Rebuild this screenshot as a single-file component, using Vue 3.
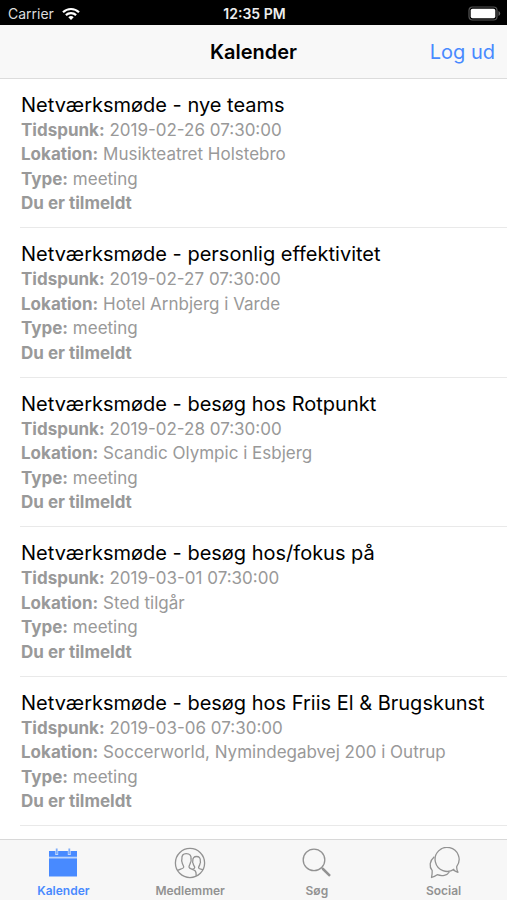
<script setup>
import { ref } from 'vue'

const events = [
  { title: 'Netværksmøde - nye teams', time: '2019-02-26 07:30:00', place: 'Musikteatret Holstebro' },
  { title: 'Netværksmøde - personlig effektivitet', time: '2019-02-27 07:30:00', place: 'Hotel Arnbjerg i Varde' },
  { title: 'Netværksmøde - besøg hos Rotpunkt', time: '2019-02-28 07:30:00', place: 'Scandic Olympic i Esbjerg' },
  { title: 'Netværksmøde - besøg hos/fokus på', time: '2019-03-01 07:30:00', place: 'Sted tilgår' },
  { title: 'Netværksmøde - besøg hos Friis El & Brugskunst', time: '2019-03-06 07:30:00', place: 'Soccerworld, Nymindegabvej 200 i Outrup' },
]
const tabs = ['Kalender', 'Medlemmer', 'Søg', 'Social']
const active = ref('Kalender')
</script>

<template>
  <div class="screen">
    <div class="status">
      <div class="carrier">
        <span>Carrier</span>
        <svg width="18" height="14" viewBox="0 0 18 14" fill="none" stroke="#fff" stroke-width="2.200">
          <path d="M1 5.2C5.4.9 12.600.9 17 5.2" />
          <path d="M3.900 8.100C6.700 5.400 11.300 5.400 14.100 8.100" />
          <path d="M6.300 10.300Q9 7.900 11.700 10.300L9 13Z" fill="#fff" stroke="none" />
        </svg>
      </div>
      <span class="clock">12:35 PM</span>
      <svg class="battery" width="33" height="15" viewBox="0 0 33 15">
        <rect x="1" y="1" width="28" height="13" rx="3.500" fill="none" stroke="#555" stroke-width="1.200" />
        <rect x="2.700" y="2.700" width="24.600" height="9.600" rx="1.800" fill="#fff" />
        <path d="M30.500 5v5q1.700-.7 1.700-2.500T30.500 5Z" fill="#666" />
      </svg>
    </div>

    <header class="navbar">
      <h1>Kalender</h1>
      <button class="logout" type="button">Log ud</button>
    </header>

    <ul class="events">
      <li v-for="event in events" :key="event.time" class="event">
        <h2>{{ event.title }}</h2>
        <div class="details">
          <p><b>Tidspunk:</b> {{ event.time }}</p>
          <p><b>Lokation:</b> {{ event.place }}</p>
          <p><b>Type:</b> meeting</p>
          <p><b>Du er tilmeldt</b></p>
        </div>
      </li>
    </ul>

    <nav class="tabs">
      <button
        v-for="tab in tabs"
        :key="tab"
        type="button"
        class="tab"
        :class="{ active: active === tab }"
        @click="active = tab"
      >
        <svg v-if="tab === 'Kalender'" width="32" height="32" viewBox="0 0 32 32">
          <path d="M2 4h28v25.500H2Z" fill="currentColor" />
          <path d="M2 10.600h28" stroke="#bcd5fb" stroke-width="1.800" />
          <path d="M9.700 4v4M22.300 4v4" stroke="#c4d9fb" stroke-width="3" />
          <path d="M9.700 1.500v5.500M22.300 1.500v5.500" stroke="#7eacf8" stroke-width="1.800" />
        </svg>
        <svg v-else-if="tab === 'Medlemmer'" width="32" height="32" viewBox="0 0 32 32" fill="none" stroke="currentColor" stroke-width="1.300" stroke-linejoin="round">
          <circle cx="16" cy="16" r="14.600" />
          <path d="M3.600 23.500C5.500 22 9.500 22 9.700 20.200C9.900 18.600 8.200 17.500 8 15C7.700 14.500 7.600 13.200 7.900 12C7.600 8.500 9 6.600 12.200 6.600C16 6.600 17.500 8.800 17 12C17.300 13.500 17 14.800 16.600 15.200C16.300 17.400 14.800 18.500 15 20.200C15.200 22 19.800 22.500 21.300 24C22.300 25.200 22.200 27 22.200 29" />
          <path d="M18.300 22.300C19.800 22 20.700 21.700 20.700 20.500C20.700 19.200 19.300 18.400 19.100 16.400C18.600 15.800 18.500 14.700 18.800 13.900C18.600 11 20 9.500 22.500 9.500C25.200 9.500 26.600 11 26.300 14C26.600 15 26.400 16.100 26 16.600C25.800 18.500 24.500 19.300 24.600 20.700C24.700 22.100 27.500 22 28.900 22.900" />
        </svg>
        <svg v-else-if="tab === 'Søg'" width="32" height="32" viewBox="0 0 32 32" fill="none" stroke="currentColor">
          <circle cx="13" cy="12.900" r="10.800" stroke-width="1.300" />
          <path d="M20.500 20.500 22 22" stroke-width="1.500" />
          <path d="M21.500 21.500 29 28.800" stroke-width="2.500" />
        </svg>
        <svg v-else width="32" height="32" viewBox="0 0 32 32" fill="none" stroke="currentColor" stroke-width="1.300" stroke-linejoin="round">
          <path d="M26.300 22A12 12 0 1 1 28.700 19.600Q28.500 22.500 30 25.300Q27.900 24.800 25.200 22.900" />
          <path d="M6.300 9.800C1.500 14 .9 19.500 4.200 23.600Q4.300 27.500 3.500 30.500Q6.500 29.500 9.200 27.700C14 29.400 19.300 28.500 21.300 25" />
        </svg>
        <span>{{ tab }}</span>
      </button>
    </nav>
  </div>
</template>

<style>
body {
  margin: 0;
}
</style>

<style scoped>
.screen {
  display: flex;
  flex-direction: column;
  min-height: 100vh;
  background: #fff;
  font-family: Inter, "Liberation Sans", sans-serif;
}
.status {
  display: grid;
  grid-template-columns: 1fr auto 1fr;
  align-items: center;
  height: 25px;
  padding: 2px 6px 0 8px;
  box-sizing: border-box;
  background: #000;
  color: #fff;
  font-size: 14px;
}
.carrier {
  display: flex;
  align-items: center;
  gap: 8px;
  color: #ddd;
}
.clock {
  color: #eee;
  font-weight: 600;
}
.battery {
  justify-self: end;
}
.navbar {
  display: grid;
  grid-template-columns: 1fr auto 1fr;
  align-items: center;
  height: 54px;
  padding: 0 12px;
  box-sizing: border-box;
  border-bottom: 1px solid #dcdcdc;
  background: #f8f8f8;
}
h1 {
  grid-column: 2;
  margin: 0;
  font-size: 20px;
  font-weight: 600;
}
button {
  margin: 0;
  padding: 0;
  border: 0;
  background: none;
  font-family: inherit;
  cursor: pointer;
}
.logout {
  justify-self: end;
  color: #488aff;
  font-size: 20px;
}
.events {
  flex: 1;
  display: flex;
  flex-direction: column;
  margin: 0;
  padding: 0 0 13px 20px;
  list-style: none;
}
.event {
  flex: 1;
  display: flex;
  flex-direction: column;
  padding: 13px 20px 12px 1px;
  border-bottom: 1px solid #e9e9e9;
}
h2 {
  margin: 0;
  font-size: 20px;
  font-weight: 400;
  line-height: 26px;
}
.details {
  flex: 1;
  display: flex;
  flex-direction: column;
  justify-content: space-between;
  color: #999;
  font-size: 17px;
  line-height: 24px;
}
p {
  margin: 0;
}
b {
  font-weight: 700;
}
.tabs {
  display: grid;
  grid-template-columns: repeat(4, 1fr);
  height: 61px;
  box-sizing: border-box;
  border-top: 1px solid #d8d8d8;
  background: #f7f7f7;
}
.tab {
  display: flex;
  flex-direction: column;
  align-items: center;
  gap: 4px;
  padding-top: 7px;
  color: #929292;
  font-size: 12px;
  font-weight: 600;
  line-height: 15px;
}
.tab.active {
  color: #488aff;
}
</style>
